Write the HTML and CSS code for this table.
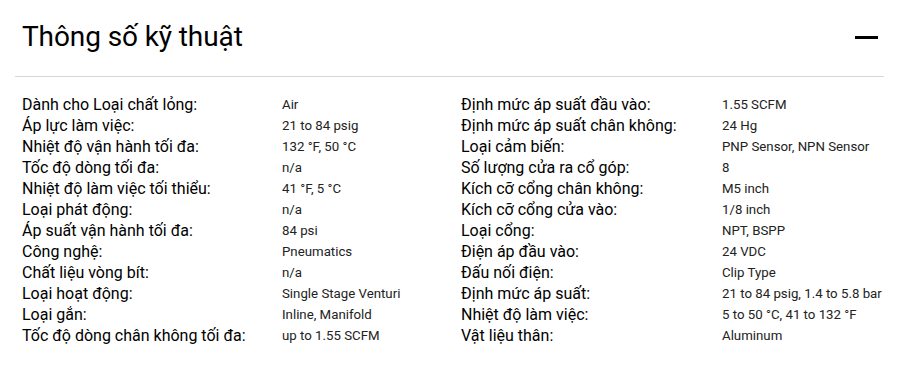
FILE: index.html
```html
<!DOCTYPE html>
<html lang="vi">
<head>
<meta charset="utf-8">
<title>Thông số kỹ thuật</title>
<link rel="stylesheet" href="styles.css">
</head>
<body>
<section class="specs">
  <header class="specs-head">
    <h2 class="specs-title">Thông số kỹ thuật</h2>
    <span class="collapse-icon" aria-label="Thu gọn"></span>
  </header>
  <div class="specs-body">
    <dl class="spec-col">
      <dt>Dành cho Loại chất lỏng:</dt><dd>Air</dd>
      <dt>Áp lực làm việc:</dt><dd>21 to 84 psig</dd>
      <dt>Nhiệt độ vận hành tối đa:</dt><dd>132 °F, 50 °C</dd>
      <dt>Tốc độ dòng tối đa:</dt><dd>n/a</dd>
      <dt>Nhiệt độ làm việc tối thiểu:</dt><dd>41 °F, 5 °C</dd>
      <dt>Loại phát động:</dt><dd>n/a</dd>
      <dt>Áp suất vận hành tối đa:</dt><dd>84 psi</dd>
      <dt>Công nghệ:</dt><dd>Pneumatics</dd>
      <dt>Chất liệu vòng bít:</dt><dd>n/a</dd>
      <dt>Loại hoạt động:</dt><dd>Single Stage Venturi</dd>
      <dt>Loại gắn:</dt><dd>Inline, Manifold</dd>
      <dt>Tốc độ dòng chân không tối đa:</dt><dd>up to 1.55 SCFM</dd>
    </dl>
    <dl class="spec-col">
      <dt>Định mức áp suất đầu vào:</dt><dd>1.55 SCFM</dd>
      <dt>Định mức áp suất chân không:</dt><dd>24 Hg</dd>
      <dt>Loại cảm biến:</dt><dd>PNP Sensor, NPN Sensor</dd>
      <dt>Số lượng cửa ra cổ góp:</dt><dd>8</dd>
      <dt>Kích cỡ cổng chân không:</dt><dd>M5 inch</dd>
      <dt>Kích cỡ cổng cửa vào:</dt><dd>1/8 inch</dd>
      <dt>Loại cổng:</dt><dd>NPT, BSPP</dd>
      <dt>Điện áp đầu vào:</dt><dd>24 VDC</dd>
      <dt>Đấu nối điện:</dt><dd>Clip Type</dd>
      <dt>Định mức áp suất:</dt><dd>21 to 84 psig, 1.4 to 5.8 bar</dd>
      <dt>Nhiệt độ làm việc:</dt><dd>5 to 50 °C, 41 to 132 °F</dd>
      <dt>Vật liệu thân:</dt><dd>Aluminum</dd>
    </dl>
  </div>
</section>
</body>
</html>
```
FILE: styles.css
```css
html, body {
  margin: 0;
  padding: 0;
  background: #fff;
}
body {
  font-family: Roboto, "Noto Sans", sans-serif;
  color: #000;
}
.specs {
  width: 869px;
  margin-left: 15px;
}
.specs-head {
  display: flex;
  align-items: center;
  justify-content: space-between;
  height: 76px;
  padding: 0 6px 0 7px;
  border-bottom: 1px solid #d6d6d6;
}
.specs-title {
  margin: -3px 0 0;
  font-size: 28px;
  font-weight: 400;
  line-height: 1;
  color: #000;
  letter-spacing: -0.1px;
}
.collapse-icon {
  display: block;
  width: 23px;
  height: 3px;
  background: #000;
  margin-top: -1px;
}
.specs-body {
  display: flex;
  padding: 17px 0 0 7px;
}
.spec-col {
  display: grid;
  grid-template-columns: 260px 1fr;
  grid-auto-rows: 21px;
  align-items: center;
  margin: 0;
  width: 439px;
  flex-shrink: 0;
}
.spec-col + .spec-col {
  grid-template-columns: 261px 1fr;
  width: 423px;
}
.spec-col dt {
  font-size: 16px;
  color: #000;
  white-space: nowrap;
}
.spec-col dd {
  margin: 0;
  font-size: 13.25px;
  color: #222;
  white-space: nowrap;
}
```
